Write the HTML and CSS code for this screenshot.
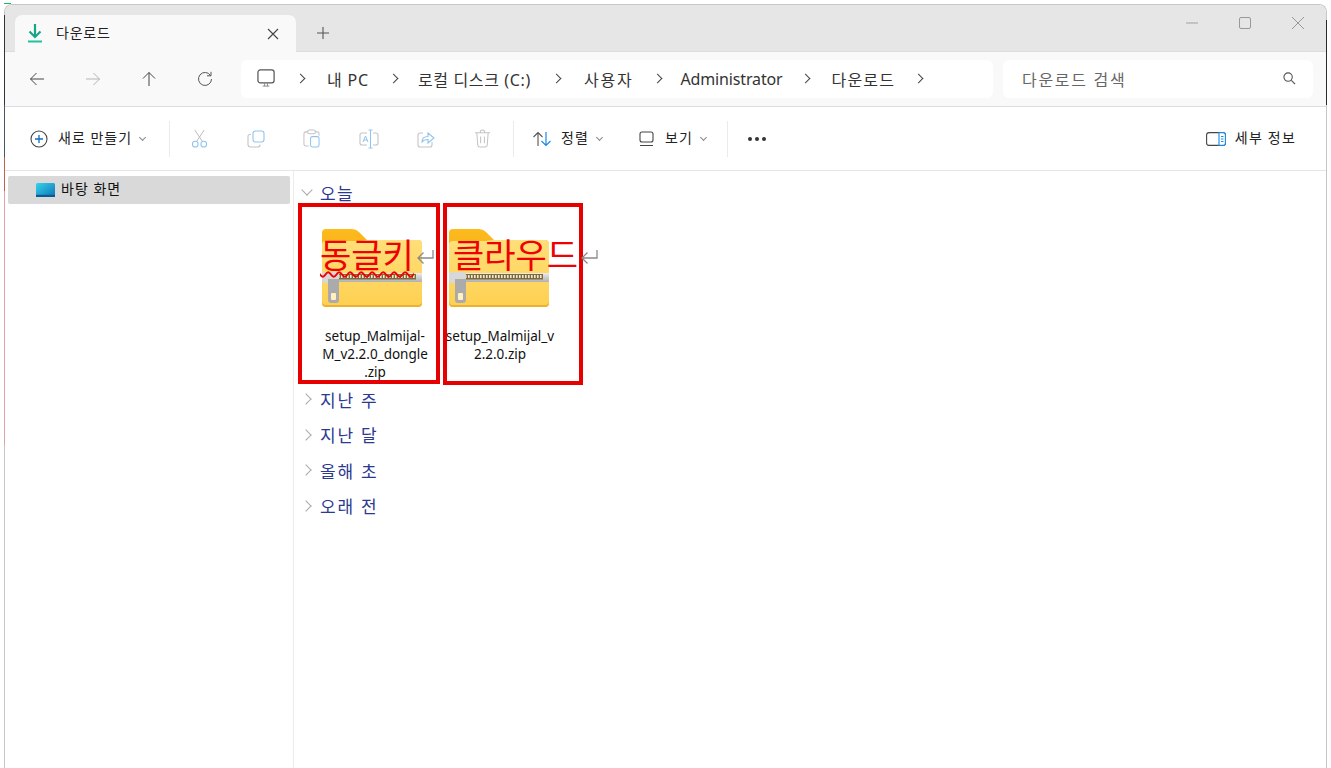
FILE: index.html
```html
<!DOCTYPE html>
<html lang="ko">
<head>
<meta charset="utf-8">
<title>다운로드</title>
<link rel="stylesheet" href="styles.css">
</head>
<body>
<svg class="defs" width="0" height="0" aria-hidden="true">
  <defs>
    <linearGradient id="fback" x1="0" y1="0" x2="0" y2="1"><stop offset="0" stop-color="#fdbb1e"/><stop offset="1" stop-color="#f4ab16"/></linearGradient>
    <linearGradient id="ffront" x1="0" y1="0" x2="0" y2="1"><stop offset="0" stop-color="#ffdf7a"/><stop offset="1" stop-color="#fed050"/></linearGradient>
    <linearGradient id="fzip" x1="0" y1="0" x2="0" y2="1"><stop offset="0" stop-color="#ececec"/><stop offset="1" stop-color="#b0b0b0"/></linearGradient>
    <linearGradient id="fdesk" x1="0" y1="0" x2="1" y2="1"><stop offset="0" stop-color="#35d5ea"/><stop offset="1" stop-color="#0f72b8"/></linearGradient>
    <symbol id="zipfolder" viewBox="0 0 100 78">
      <path d="M0 4Q0 0 4 0H30Q34 0 37 3L45 11H96Q100 11 100 15V40H0Z" fill="url(#fback)"/>
      <path d="M0 16Q0 12 4 12H36L45 11H96Q100 11 100 15V74Q100 78 96 78H4Q0 78 0 74Z" fill="url(#ffront)"/>
      <path d="M0 74Q0 78 4 78H96Q100 78 100 74V72Q100 76 96 76H4Q0 76 0 72Z" fill="#eeb030"/>
      <rect x="0" y="44" width="100" height="9" fill="url(#fzip)"/>
      <rect x="16" y="45" width="78" height="5.500" fill="#7d6a3c"/>
      <path d="M16 47.500h78" stroke="#efe9d2" stroke-width="3" stroke-dasharray="1.600 1.400" fill="none"/>
      <rect x="0" y="43" width="17" height="11" rx="3" fill="#d8d8d8"/>
      <path d="M6 50H17V71Q17 74 14 74H9Q6 74 6 71Z" fill="#ababab"/>
      <rect x="9" y="64" width="5" height="7" rx="1" fill="#fff1c0"/>
    </symbol>
  </defs>
</svg>

<div class="window">
  <header class="titlebar">
    <div class="tab">
      <svg class="tab-icon" viewBox="0 0 16 19" width="16" height="19"><path d="M8 0V13M2.500 7.500L8 13L13.500 7.500" fill="none" stroke="#17a589" stroke-width="2.200"/><path d="M1 17.500H15" stroke="#1cc5a0" stroke-width="2"/></svg>
      <span class="tab-title">다운로드</span>
      <svg class="tab-close" viewBox="0 0 12 12" width="12" height="12"><path d="M1 1L11 11M11 1L1 11" stroke="#444" stroke-width="1.100"/></svg>
    </div>
    <svg class="tab-new" viewBox="0 0 12 12" width="12" height="12"><path d="M6 0V12M0 6H12" stroke="#555" stroke-width="1.100"/></svg>
    <div class="winctl">
      <svg viewBox="0 0 12 12" width="12" height="12"><path d="M0 6H12" stroke="#a0a0a0" stroke-width="1"/></svg>
      <svg viewBox="0 0 12 12" width="12" height="12"><rect x="0.500" y="0.500" width="11" height="11" rx="1.500" fill="none" stroke="#999"/></svg>
      <svg viewBox="0 0 12 12" width="12" height="12"><path d="M0 0L12 12M12 0L0 12" stroke="#999" stroke-width="1"/></svg>
    </div>
  </header>

  <nav class="addressbar">
    <div class="navs">
      <svg viewBox="0 0 16 16" width="16" height="16"><path d="M15 8H1.500M7.500 2L1.500 8L7.500 14" fill="none" stroke="#444" stroke-width="1"/></svg>
      <svg viewBox="0 0 16 16" width="16" height="16"><path d="M1 8H14.500M8.500 2L14.500 8L8.500 14" fill="none" stroke="#b5b5b5" stroke-width="1"/></svg>
      <svg viewBox="0 0 16 16" width="16" height="16"><path d="M8 15V1.500M2 7.500L8 1.500L14 7.500" fill="none" stroke="#444" stroke-width="1"/></svg>
      <svg viewBox="0 0 16 16" width="16" height="16"><path d="M13.500 4.500A6.500 6.500 0 1 0 14.500 8M14 0.800V4.800H10" fill="none" stroke="#555" stroke-width="1"/></svg>
    </div>
    <div class="crumbs">
      <svg class="pc" viewBox="0 0 20 20" width="19" height="19"><rect x="1" y="1" width="17" height="13.500" rx="2.500" fill="none" stroke="#555" stroke-width="1.300"/><path d="M6 18H13M8 15V18M11 15V18" stroke="#888" stroke-width="1"/></svg>
      <span class="sep"></span><span class="crumb ko-a">내 PC</span>
      <span class="sep"></span><span class="crumb ko-b">로컬 디스크 (C:)</span>
      <span class="sep"></span><span class="crumb ko-c">사용자</span>
      <span class="sep"></span><span class="crumb en">Administrator</span>
      <span class="sep"></span><span class="crumb ko-d">다운로드</span>
      <span class="sep"></span>
    </div>
    <div class="search">
      <span>다운로드 검색</span>
      <svg viewBox="0 0 14 14" width="13" height="13"><circle cx="5.500" cy="5.500" r="4.500" fill="none" stroke="#555" stroke-width="1.200"/><path d="M9 9L13 13" stroke="#555" stroke-width="1.300"/></svg>
    </div>
  </nav>

  <div class="toolbar">
    <div class="tool new">
      <svg viewBox="0 0 18 18" width="18" height="18"><circle cx="9" cy="9" r="8" fill="none" stroke="#444" stroke-width="1.100"/><path d="M9 5V13M5 9H13" stroke="#0f6cbd" stroke-width="1.300"/></svg>
      <span>새로 만들기</span><i class="chev"></i>
    </div>
    <div class="divider"></div>
    <div class="icons">
      <svg viewBox="0 0 18 20" width="17" height="19"><path d="M4 1L12 13M14 1L6 13" stroke="#b8b8b8" stroke-width="1"/><circle cx="4.500" cy="16" r="3" fill="none" stroke="#90c4ee" stroke-width="1.100"/><circle cx="13.500" cy="16" r="3" fill="none" stroke="#90c4ee" stroke-width="1.100"/></svg>
      <svg viewBox="0 0 18 18" width="18" height="18"><rect x="6" y="1" width="11" height="11" rx="2.500" fill="none" stroke="#90c4ee" stroke-width="1.100"/><path d="M4 4.500H3Q1 4.500 1 6.500V14.500Q1 17 3.500 17H11Q13 17 13 15V14.500" fill="none" stroke="#c4c4c4" stroke-width="1.100"/></svg>
      <svg viewBox="0 0 18 20" width="17" height="19"><path d="M5 3H3Q1 3 1 5V16Q1 18 3 18H6M13 3H15Q17 3 17 5V7" fill="none" stroke="#c4c4c4" stroke-width="1.100"/><rect x="5" y="1" width="8" height="4" rx="1.500" fill="none" stroke="#c4c4c4" stroke-width="1.100"/><rect x="8" y="8" width="9" height="11" rx="2" fill="none" stroke="#90c4ee" stroke-width="1.100"/></svg>
      <svg viewBox="0 0 20 20" width="20" height="20"><path d="M8 4H3Q1 4 1 6V14Q1 16 3 16H8M14 4H17Q19 4 19 6V14Q19 16 17 16H14" fill="none" stroke="#c4c4c4" stroke-width="1.100"/><path d="M11.500 1V19M9.500 1H13.500M9.500 19H13.500" stroke="#90c4ee" stroke-width="1"/><path d="M4 13L6.500 7L9 13M5 11H8" fill="none" stroke="#90c4ee" stroke-width="1"/></svg>
      <svg viewBox="0 0 18 18" width="18" height="18"><path d="M6 3H3Q1 3 1 5V15Q1 17 3 17H13Q15 17 15 15V12" fill="none" stroke="#c4c4c4" stroke-width="1.100"/><path d="M5 12Q5 6.500 11 6.500V3L17 8L11 13V9.500Q7 9.500 5 12Z" fill="none" stroke="#90c4ee" stroke-width="1.100"/></svg>
      <svg viewBox="0 0 18 20" width="17" height="19"><path d="M1 4H17M6.500 4Q6.500 1 9 1Q11.500 1 11.500 4M3 4L4 17Q4 19 6 19H12Q14 19 14 17L15 4M7 8V15M11 8V15" fill="none" stroke="#c4c4c4" stroke-width="1.100"/></svg>
    </div>
    <div class="divider"></div>
    <div class="tool sort">
      <svg viewBox="0 0 20 16" width="20" height="16"><path d="M6 15V1.500M1.500 6L6 1.500L10.500 6" fill="none" stroke="#555" stroke-width="1.100"/><path d="M14 1V14.500M9.500 10L14 14.500L18.500 10" fill="none" stroke="#1e88e5" stroke-width="1.200"/></svg>
      <span>정렬</span><i class="chev"></i>
    </div>
    <div class="tool view">
      <svg viewBox="0 0 16 16" width="16" height="16"><rect x="1" y="1" width="13" height="10" rx="2" fill="none" stroke="#444" stroke-width="1.100"/><path d="M1 14.500H14" stroke="#444" stroke-width="1.100"/></svg>
      <span>보기</span><i class="chev"></i>
    </div>
    <div class="divider"></div>
    <div class="more"><i></i><i></i><i></i></div>
    <div class="tool details">
      <svg viewBox="0 0 20 14" width="20" height="14"><rect x="0.600" y="0.600" width="18.800" height="12.800" rx="2.500" fill="none" stroke="#444" stroke-width="1.100"/><path d="M13 0.600V13.400H17Q19.400 13.400 19.400 11V3Q19.400 0.600 17 0.600Z" fill="#fff" stroke="#1e88e5" stroke-width="1.100"/><path d="M15 4.500H17.500M15 7H17.500M15 9.500H17.500" stroke="#1e88e5" stroke-width="1"/></svg>
      <span>세부 정보</span>
    </div>
  </div>

  <div class="main">
    <aside class="sidebar">
      <div class="side-item">
        <svg viewBox="0 0 19 14" width="19" height="14"><rect width="19" height="14" rx="1.500" fill="url(#fdesk)"/><rect y="11.800" width="19" height="2.200" fill="#0c5a94"/></svg>
        <span>바탕 화면</span>
      </div>
    </aside>
    <section class="content">
      <h2 class="group open"><i class="caret"></i>오늘</h2>
      <div class="files">
        <figure class="file">
          <svg class="zip" width="100" height="78"><use href="#zipfolder"/></svg>
          <figcaption>setup_Malmijal-<br>M_v2.2.0_dongle<br>.zip</figcaption>
        </figure>
        <figure class="file">
          <svg class="zip" width="100" height="78"><use href="#zipfolder"/></svg>
          <figcaption>setup_Malmijal_v<br>2.2.0.zip</figcaption>
        </figure>
      </div>
      <h2 class="group"><i class="caret"></i>지난 주</h2>
      <h2 class="group"><i class="caret"></i>지난 달</h2>
      <h2 class="group"><i class="caret"></i>올해 초</h2>
      <h2 class="group"><i class="caret"></i>오래 전</h2>
    </section>
  </div>
</div>

<div class="mark mark-a"></div>
<div class="mark mark-b"></div>
<div class="note note-a">
  <span class="squiggle">동글키</span>
  <svg class="ret" viewBox="0 0 18 16" width="18" height="16"><path d="M17 1V9H2M7.500 3.500L2 9L7.500 14.500" fill="none" stroke="#8a8a8a" stroke-width="1.300"/></svg>
</div>
<div class="note note-b">
  <span>클라우드</span>
  <svg class="ret" viewBox="0 0 18 16" width="18" height="16"><path d="M17 1V9H2M7.500 3.500L2 9L7.500 14.500" fill="none" stroke="#8a8a8a" stroke-width="1.300"/></svg>
</div>
</body>
</html>
```

FILE: styles.css
```css
* { box-sizing: border-box; }
html, body { margin: 0; height: 100%; overflow: hidden; background: #fff; }
body {
  position: relative;
  padding: 4px 4px 0 4px;
  font-family: "Noto Sans", "Noto Sans CJK KR", sans-serif;
  color: #222;
  background: linear-gradient(#1db954, #1db954) no-repeat 4px 3px / 7px 1px, #fff;
}
/* Scraps of the desktop behind the window, showing along its left and right edges */
body::before {
  content: "";
  position: absolute;
  left: 4px;
  top: 15px;
  width: 1px;
  height: 430px;
  background: linear-gradient(#333 0 21%, #4a5568 21% 33%, #c0604f 33% 41%, #d9a5a8 41%);
}
body::after {
  content: "";
  position: absolute;
  left: 1326px;
  top: 20px;
  width: 1px;
  height: 85px;
  background: #2a2a2a;
}
.defs { position: absolute; }
.window {
  height: 764px;
  display: flex;
  flex-direction: column;
  border: 1px solid #c6c6c6;
  border-bottom: 0;
  border-radius: 8px 8px 0 0;
  overflow: hidden;
  background: #fff;
}
.titlebar {
  height: 47px;
  flex: none;
  display: flex;
  align-items: flex-end;
  padding-left: 10px;
  background: #e6e6e6;
  border-bottom: 1px solid #dcdcdc;
}
.tab {
  width: 281px;
  height: 37px;
  margin-bottom: -1px;
  display: flex;
  align-items: center;
  padding: 0 17px 0 12px;
  background: #f9f9f9;
  border-radius: 7px 7px 0 0;
}
.tab-title { margin: -4px 0 0 13px; font-size: 14px; letter-spacing: 0.8px; color: #222; }
.tab-close { margin-left: auto; }
.tab-new { margin: 0 0 12px 21px; }
.winctl {
  margin-left: auto;
  align-self: stretch;
  display: flex;
  align-items: center;
  gap: 41px;
  padding: 0 22px 10px 0;
}
.addressbar {
  height: 55px;
  flex: none;
  display: flex;
  align-items: center;
  background: #f9f9f9;
  border-bottom: 1px solid #dedede;
  padding: 0 12px 1px 24px;
}
.navs { width: 212px; display: flex; gap: 40px; }
.crumbs {
  width: 752px;
  height: 38px;
  display: flex;
  align-items: center;
  padding-left: 16px;
  background: #fff;
  border-radius: 6px;
  font-size: 16px;
  color: #333;
}
.pc { margin-right: 21px; }
.sep {
  flex: none;
  width: 7px;
  height: 7px;
  border-top: 1.200px solid #444;
  border-right: 1.200px solid #444;
  transform: rotate(45deg);
  margin-right: 22px;
}
.crumb { margin-right: 22px; white-space: nowrap; }
.ko-a { letter-spacing: 0.8px; margin-right: 21px; margin-left: 1px; }
.ko-b { letter-spacing: 0.65px; margin-left: -1px; }
.ko-c { letter-spacing: 1.800px; margin-left: 2px; margin-right: 20px; }
.en { letter-spacing: -0.150px; margin-left: -2px; margin-right: 19px; }
.ko-d { letter-spacing: 1.200px; margin-left: 1px; margin-right: 20px; }
.search {
  width: 310px;
  height: 38px;
  margin-left: 10px;
  display: flex;
  align-items: center;
  justify-content: space-between;
  padding: 0 17px 0 19px;
  background: #fff;
  border-radius: 6px;
  font-size: 16px;
  letter-spacing: 1.700px;
  color: #666;
}
.toolbar {
  height: 64px;
  flex: none;
  display: flex;
  align-items: center;
  padding-left: 25px;
  border-bottom: 1px solid #e6e6e6;
  font-size: 14px;
  letter-spacing: 1px;
}
.tool { display: flex; align-items: center; }
.tool span { margin-top: -3px; }
.new span { margin-left: 10px; }
.new { width: 139px; }
.divider { width: 1px; height: 36px; background: #ebebeb; }
.icons {
  width: 343px;
  display: flex;
  align-items: center;
  gap: 38.500px;
  padding-left: 21px;
}
.chev {
  width: 5px;
  height: 5px;
  margin: -3px 0 0 8px;
  border-right: 1px solid #888;
  border-bottom: 1px solid #888;
  transform: rotate(45deg);
}
.sort { margin-left: 18px; width: 107px; }
.sort span { margin-left: 9px; }
.view { width: 88px; }
.view span { margin-left: 10px; }
.more { margin-left: 20px; display: flex; gap: 3px; }
.more i { width: 4px; height: 4px; border-radius: 50%; background: #333; }
.details { margin-left: auto; padding-right: 30px; }
.details span { margin-left: 9px; letter-spacing: 1.200px; }
.main { flex: 1; display: flex; min-height: 0; }
.sidebar { width: 289px; flex: none; padding: 5px 3px; border-right: 1px solid #ececec; }
.side-item {
  height: 28px;
  display: flex;
  align-items: center;
  padding-left: 28px;
  background: #d9d9d9;
  border-radius: 2px;
  font-size: 14px;
  letter-spacing: 1px;
  color: #111;
}
.side-item span { margin: -4px 0 0 6px; }
.content { flex: 1; padding-top: 9px; padding-left: 8px; }
.group {
  margin: 0;
  height: 24px;
  display: flex;
  align-items: center;
  font-size: 17px;
  font-weight: 400;
  letter-spacing: 1.800px;
  color: #2b3990;
  margin-bottom: 11.500px;
}
.caret {
  width: 8px;
  height: 8px;
  margin: 0 10px 0 0;
  border-top: 1.200px solid #aaa;
  border-right: 1.200px solid #aaa;
  transform: rotate(45deg);
}
.group.open { margin-bottom: 0; letter-spacing: 1.400px; }
.group.open .caret { transform: rotate(135deg); margin: -5px 9px 0 1px; }
.files { display: flex; gap: 17px; height: 183px; padding-left: 19px; }
.file { margin: 0; width: 108px; display: flex; flex-direction: column; align-items: center; padding-top: 25px; }
.zip { margin-right: 6px; }
.file + .file .zip { margin-right: 2px; }
.file figcaption {
  margin-top: 20px;
  font-size: 13.500px;
  line-height: 18px;
  text-align: center;
  white-space: nowrap;
  color: #111;
}
.mark { position: absolute; border: 4px solid #e60000; }
.mark-a { left: 298px; top: 203px; width: 142px; height: 181px; }
.mark-b { left: 443px; top: 203px; width: 140px; height: 182px; }
.note {
  position: absolute;
  top: 232px;
  display: flex;
  align-items: center;
  font-size: 34px;
  line-height: 44px;
  color: #f00000;
  font-family: "Noto Sans CJK KR", sans-serif;
  white-space: nowrap;
}
.note-a { left: 320px; }
.note-b { left: 453px; }
.squiggle { text-decoration: underline wavy #f00000 1.500px; text-underline-offset: 3px; }
.ret { margin: 6px 0 0 2px; }
```
